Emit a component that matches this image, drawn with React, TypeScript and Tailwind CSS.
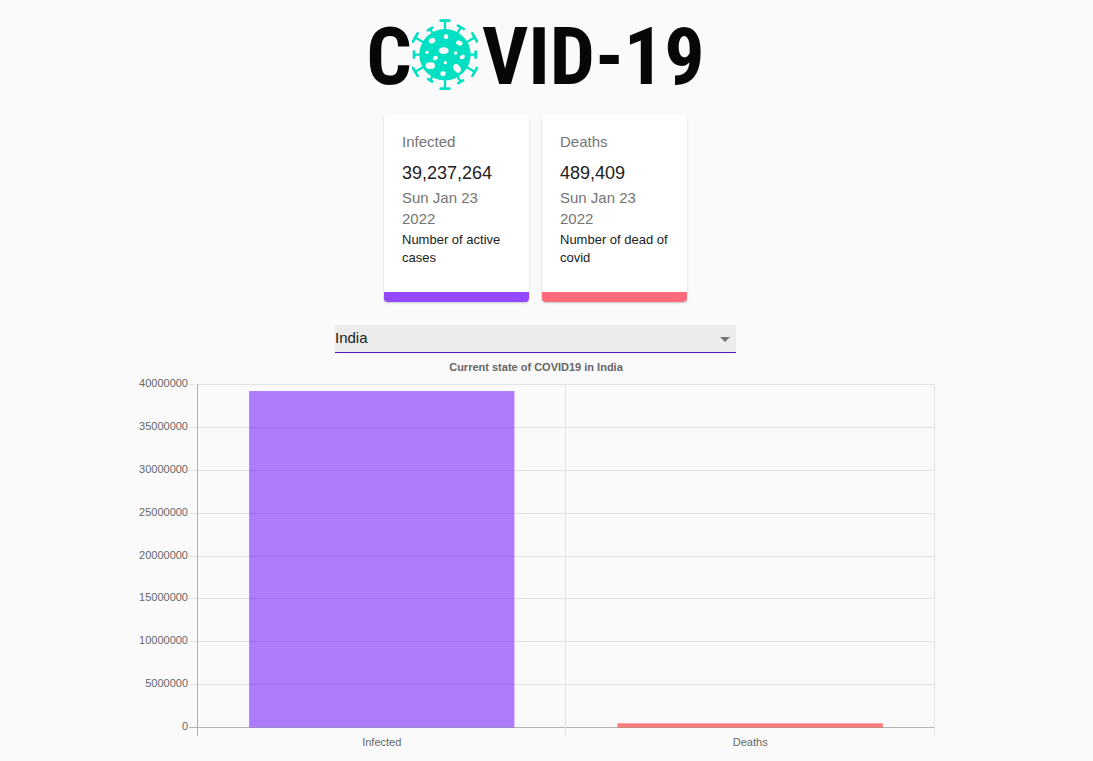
import { useState } from "react";

type Stat = {
  title: string;
  value: number;
  note: string;
  accent: string;
};

const stats: Stat[] = [
  { title: "Infected", value: 39237264, note: "Number of active cases", accent: "border-[#9549ff]" },
  { title: "Deaths", value: 489409, note: "Number of dead of covid", accent: "border-[#ff6b7b]" },
];

const updated = "Sun Jan 23 2022";

// angle in degrees clockwise from the top, distance of the cap from the centre, cap half-width
const spikes = [
  [0, 102, 16],
  [30, 95, 13],
  [60, 103, 17],
  [90, 92, 12],
  [120, 103, 17],
  [150, 94, 11],
  [180, 102, 16],
  [210, 89, 10],
  [240, 103, 17],
  [270, 93, 12],
  [300, 103, 17],
  [330, 89, 11],
];

// centre x, centre y, radius x, radius y, rotation
const spots = [
  [252, 81, 7, 7, 0],
  [210, 93, 10, 8, -20],
  [292, 100, 10, 7, 20],
  [245, 123, 15, 10, 0],
  [195, 128, 5, 5, 0],
  [281, 130, 5, 5, 0],
  [301, 142, 8, 6, -20],
  [220, 145, 8, 6, -30],
  [250, 159, 5, 5, 0],
  [205, 168, 14, 10, 0],
  [285, 176, 10, 14, -35],
  [243, 192, 8, 7, 0],
];

function Virus() {
  return (
    <svg viewBox="150 25 198 219" className="h-[73px] w-[66px] shrink-0" aria-hidden="true">
      <g stroke="#00e0c3" strokeLinecap="round">
        {spikes.map(([angle, reach, half]) => (
          <g key={angle} transform={`translate(249 135) rotate(${angle})`}>
            <path d={`M0 -70V${-reach}`} strokeWidth="7" />
            <path d={`M${3 - half} ${-reach}H${half - 3}`} strokeWidth="8" />
          </g>
        ))}
      </g>
      <circle cx="249" cy="135" r="77" fill="#00e0c3" />
      <g fill="#fafafa">
        {spots.map(([x, y, rx, ry, turn]) => (
          <ellipse key={`${x}-${y}`} cx={x} cy={y} rx={rx} ry={ry} transform={`rotate(${turn} ${x} ${y})`} />
        ))}
      </g>
    </svg>
  );
}

function Logo() {
  return (
    <h1
      aria-label="COVID-19"
      className="flex h-[76px] items-center justify-center font-['Roboto_Condensed',Roboto,sans-serif] text-[80px] leading-[76px] font-bold text-[#050807]"
    >
      <span className="pt-1.5">C</span>
      <Virus />
      <span className="pt-1.5 pl-1">VID-19</span>
    </h1>
  );
}

function StatCard({ title, value, note, accent }: Stat) {
  return (
    <article
      className={`w-[145px] rounded-sm border-b-10 bg-white px-[18px] pt-[17px] pb-[25px] shadow-[0_1px_2px_rgba(0,0,0,0.22)] ${accent}`}
    >
      <h2 className="mb-[7px] text-[15px] leading-[21px] text-[#757575]">{title}</h2>
      <p className="text-lg leading-7 text-[#212121]">{value.toLocaleString("en-US")}</p>
      <p className="mb-0.5 text-[15px] leading-[21px] text-[#757575]">{updated}</p>
      <p className="-mr-2 text-[13px] leading-[18px] text-[#212121]">{note}</p>
    </article>
  );
}

const left = 63.5;
const right = 800.5;
const top = 31.5;
const base = 374.5;
const limit = 40000000;
const ticks = [40000000, 35000000, 30000000, 25000000, 20000000, 15000000, 10000000, 5000000, 0];
const fills = ["rgba(98,0,255,0.5)", "rgba(255,0,0,0.5)"];

function Chart({ country }: { country: string }) {
  const slot = (right - left) / stats.length;
  const barWidth = slot * 0.72;
  const divider = Math.floor(left + slot) - 0.5;
  return (
    <svg
      viewBox="0 0 803 400"
      role="img"
      aria-label={`Current state of COVID19 in ${country}`}
      className="w-full max-w-[803px] font-['Liberation_Sans',Arial,sans-serif] text-[11px]"
      fill="#666666"
    >
      <text x="402" y="18" textAnchor="middle" className="font-bold">
        {`Current state of COVID19 in ${country}`}
      </text>
      {ticks.map((tick) => {
        const y = Math.floor(base - ((base - top) * tick) / limit);
        return (
          <g key={tick}>
            <path d={`M55 ${y + 0.5}H${right}`} stroke={tick === 0 ? "#b4b4b4" : "#e3e3e3"} />
            <text x="54" y={y + 3} textAnchor="end">
              {tick}
            </text>
          </g>
        );
      })}
      <path d={`M${left} ${top}V383`} stroke="#b0b0b0" />
      <path d={`M${divider} ${top}V383M${right} ${top}V383`} stroke="#e3e3e3" />
      {stats.map((stat, i) => {
        const height = ((base - top) * stat.value) / limit;
        const middle = left + slot * (i + 0.5);
        return (
          <g key={stat.title}>
            <rect x={middle - barWidth / 2} y={base - height} width={barWidth} height={height} fill={fills[i]} />
            <text x={middle} y="393" textAnchor="middle">
              {stat.title}
            </text>
          </g>
        );
      })}
    </svg>
  );
}

export default function App() {
  const [country, setCountry] = useState("India");
  return (
    <main className="flex min-h-screen flex-col items-center bg-[#fafafa] pt-4 pr-[22px] font-['Liberation_Sans',Arial,sans-serif]">
      <Logo />
      <section className="mt-[22px] flex flex-wrap justify-center gap-[13px]">
        {stats.map((stat) => (
          <StatCard key={stat.title} {...stat} />
        ))}
      </section>
      <div className="relative mt-[23px] w-full max-w-[401px]">
        <select
          aria-label="Country"
          value={country}
          onChange={(event) => setCountry(event.target.value)}
          className="block h-7 w-full appearance-none border-b border-[#5a12c4] bg-[#ececec] pr-6 text-[15px] text-[#212121] outline-none"
        >
          <option>India</option>
        </select>
        <svg viewBox="0 0 10 5" className="pointer-events-none absolute top-3 right-1.5 h-[5px] w-[10px]" aria-hidden="true">
          <path d="M0 0h10L5 5z" fill="#757575" />
        </svg>
      </div>
      <Chart country={country} />
    </main>
  );
}
